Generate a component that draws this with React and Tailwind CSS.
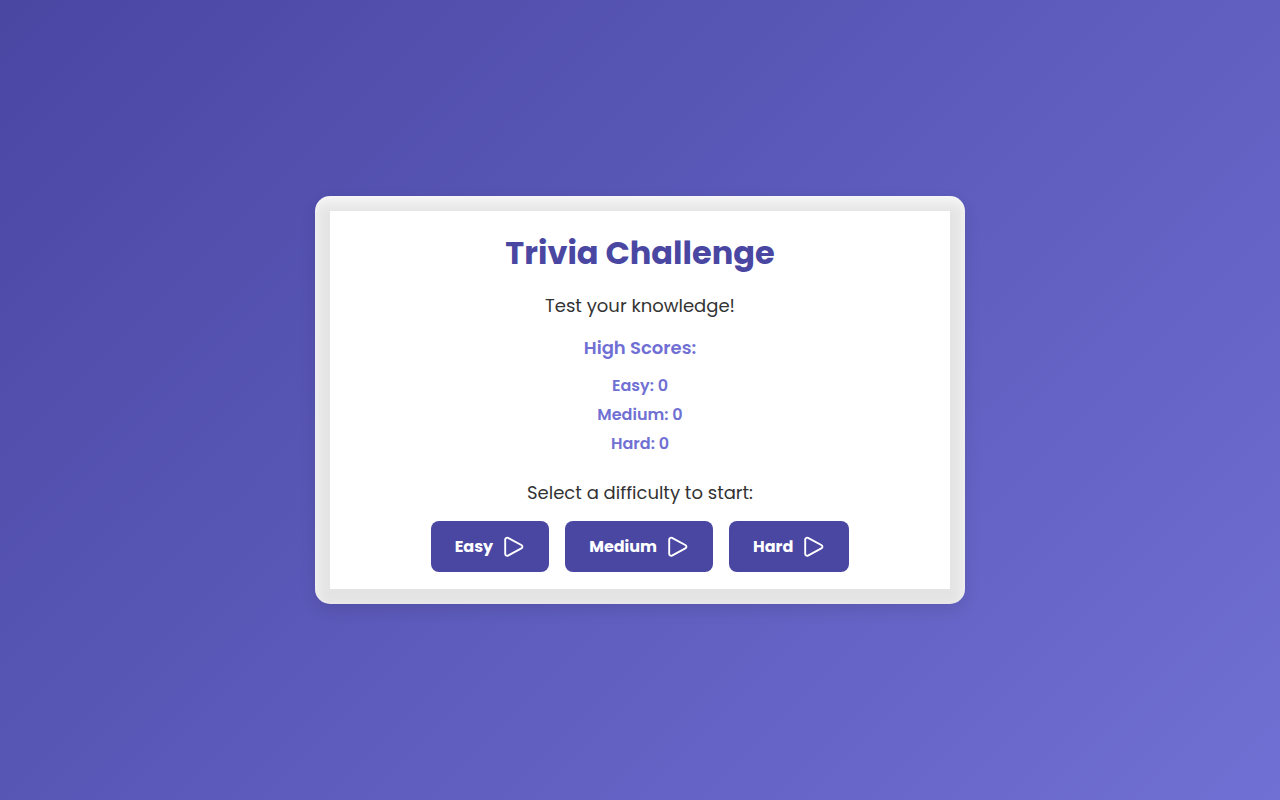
import React from "react";

const LEVELS = ["Easy", "Medium", "Hard"];

const PlayIcon = () => (
  <svg viewBox="0 0 24 24" fill="none" stroke="currentColor" strokeWidth="1.9" strokeLinecap="round" strokeLinejoin="round" className="w-6 h-6" aria-hidden="true">
    <path d="M4.200 4.700c0-1.600 1.500-2.500 2.800-1.800l13.300 7.100c1.500.8 1.500 2.500 0 3.300L7 20.600c-1.300.7-2.800-.2-2.800-1.800z" />
  </svg>
);

const App = () => {
  const scores = { Easy: 0, Medium: 0, Hard: 0 };

  return (
    <div className="min-h-screen flex items-center justify-center p-4 bg-[linear-gradient(135deg,#4a47a3,#706fd3)] font-[Poppins,Inter,sans-serif] text-[#333333]">
      <main className="w-full max-w-[650px] overflow-hidden rounded-[15px] bg-white p-[15px] shadow-[0_6px_16px_rgba(0,0,0,0.1)]">
        <div className="bg-white px-4 pt-4 pb-[17px] text-center shadow-[0_6px_16px_17px_rgba(0,0,0,0.11)]">
          <h1 className="text-[32px] leading-[52px] font-bold text-[#4a47a3]">Trivia Challenge</h1>
          <p className="mt-3 text-[18px] leading-[30px]">Test your knowledge!</p>
          <section className="mt-3 font-semibold text-[#706fd3]">
            <h2 className="text-[18px] leading-[30px]">High Scores:</h2>
            <ul className="mt-2">
              {LEVELS.map((level) => (
                <li key={level} className="text-[16px] leading-[29px]">
                  {level}: {scores[level]}
                </li>
              ))}
            </ul>
          </section>
          <p className="mt-5 text-[18px] leading-[30px]">Select a difficulty to start:</p>
          <div className="mt-[13px] flex flex-wrap justify-center gap-4">
            {LEVELS.map((level) => (
              <button key={level} type="button" className="flex items-center gap-2 rounded-lg bg-[#4a47a3] px-6 h-[51px] text-[16px] font-bold text-white cursor-pointer">
                {level}
                <PlayIcon />
              </button>
            ))}
          </div>
        </div>
      </main>
    </div>
  );
};

export default App;
